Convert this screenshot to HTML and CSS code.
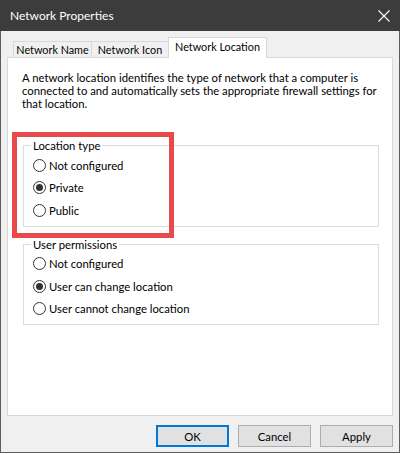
FILE: index.html
```html
<!DOCTYPE html>
<html lang="en">
<head>
  <meta charset="UTF-8" />
  <title>Network Properties</title>
  <link rel="stylesheet" href="styles.css">
</head>
<body>

  <div class="window">
    <div class="titlebar">
      <span class="title">Network Properties</span>
      <svg class="close" width="12" height="12" viewBox="0 0 12 12">
        <path d="M0.5 0.5 L11.5 11.5 M11.5 0.5 L0.5 11.5" stroke="#fff" stroke-width="1.1" fill="none" />
      </svg>
    </div>

    <div class="content">
      <div class="tabs">
        <div class="tab name">Network Name</div>
        <div class="tab icon">Network Icon</div>
        <div class="tab active">Network Location</div>
      </div>

      <div class="panel">
        <p class="desc">A network location identifies the type of network that a computer is connected to and automatically sets the appropriate firewall settings for that location.</p>

        <fieldset class="group first">
          <legend>Location type</legend>
          <label class="radio"><span class="dot"></span>Not configured</label>
          <label class="radio"><span class="dot checked"></span>Private</label>
          <label class="radio"><span class="dot"></span>Public</label>
        </fieldset>

        <fieldset class="group second">
          <legend>User permissions</legend>
          <label class="radio"><span class="dot"></span>Not configured</label>
          <label class="radio"><span class="dot checked"></span>User can change location</label>
          <label class="radio"><span class="dot"></span>User cannot change location</label>
        </fieldset>

        <div class="highlight"></div>
      </div>

      <div class="buttons">
        <button class="btn default">OK</button>
        <button class="btn">Cancel</button>
        <button class="btn">Apply</button>
      </div>
    </div>
  </div>

</body>
</html>
```

FILE: styles.css
```css
body {
  margin: 0;
  background-color: #ffffff;
  font-family: "Lato", "Noto Sans", Arial, sans-serif;
  font-size: 11.3px;
  color: #000;
}

.window {
  width: 398px;
  height: 452px;
  border: 1px solid #5c5c5c;
  border-top: none;
  background-color: #f0f0f0;
  display: flex;
  flex-direction: column;
}

.titlebar {
  height: 31px;
  background-color: #3c3c3c;
  color: #ffffff;
  display: flex;
  align-items: center;
  justify-content: space-between;
  padding: 0 9px 0 10px;
  margin: 0 -1px;
}

.title {
  font-size: 12px;
  padding-bottom: 1px;
}

.close {
  margin-right: 1px;
}

.content {
  flex: 1;
  padding: 7px 6px 0 6px;
  display: flex;
  flex-direction: column;
}

.tabs {
  display: flex;
  align-items: flex-end;
  height: 19px;
  padding-left: 6px;
  position: relative;
  z-index: 1;
}

.tab {
  height: 15px;
  line-height: 15px;
  font-size: 10.8px;
  white-space: nowrap;
  text-align: center;
  border: 1px solid #d9d9d9;
  border-bottom: none;
  background-color: #f0f0f0;
  margin-right: -1px;
}

.tab.name {
  width: 77px;
}

.tab.icon {
  width: 76px;
}

.tab.active {
  width: 97px;
  height: 20px;
  line-height: 18px;
  background-color: #ffffff;
  margin-bottom: -1px;
}

.panel {
  position: relative;
  height: 357px;
  background-color: #ffffff;
  border: 1px solid #d9d9d9;
  padding: 0 13px 0 14px;
}

.desc {
  margin: 13px -10px 0 0;
  line-height: 13px;
}

.group {
  border: 1px solid #dcdcdc;
  margin: 0;
  padding: 2px 8px 4px 9px;
}

.group.first {
  margin-top: 29px;
  margin-left: 1px;
}

.group.second {
  margin-top: 11px;
  margin-left: 1px;
}

.group legend {
  padding: 0 2px;
  margin-left: -2px;
  line-height: 13px;
}

.radio {
  display: flex;
  align-items: center;
  height: 22.5px;
}

.dot {
  width: 11px;
  height: 11px;
  border: 1px solid #333;
  border-radius: 50%;
  background-color: #fff;
  margin-right: 3px;
  display: flex;
  align-items: center;
  justify-content: center;
}

.dot.checked::after {
  content: "";
  width: 7px;
  height: 7px;
  border-radius: 50%;
  background-color: #333;
}

.highlight {
  position: absolute;
  left: 4px;
  top: 74px;
  width: 152px;
  height: 96px;
  border: 5px solid #e84a4b;
}

.buttons {
  display: flex;
  justify-content: flex-end;
  gap: 9px;
  margin-top: 9px;
}

.btn {
  width: 73px;
  height: 22px;
  background-color: #e1e1e1;
  border: 1px solid #adadad;
  font-family: "Lato", "Noto Sans", Arial, sans-serif;
  font-size: 11.3px;
  color: #000;
  padding: 0;
}

.btn.default {
  border: 2px solid #0078d7;
}
```
